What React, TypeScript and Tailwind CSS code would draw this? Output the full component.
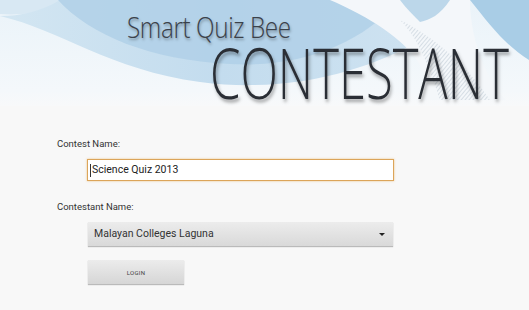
import React from 'react'

function BannerArt() {
  return (
    <svg
      className="absolute inset-0 h-full w-full"
      viewBox="0 0 529 106"
      preserveAspectRatio="none"
    >
      <defs>
        <linearGradient id="base" x1="0" y1="0" x2="0" y2="1">
          <stop offset="0" stopColor="#eaf3f9" />
          <stop offset="0.85" stopColor="#f4f8fb" />
          <stop offset="1" stopColor="#f8f9fa" />
        </linearGradient>
        <linearGradient id="swoosh" x1="0" y1="0" x2="1" y2="0">
          <stop offset="0" stopColor="#d3e6f2" />
          <stop offset="0.5" stopColor="#c3dcee" />
          <stop offset="1" stopColor="#cfe3f1" />
        </linearGradient>
        <pattern id="stripes" width="3" height="3" patternUnits="userSpaceOnUse" patternTransform="rotate(40)">
          <rect width="1" height="3" fill="#c9d3dc" />
        </pattern>
      </defs>
      <rect width="529" height="106" fill="url(#base)" />
      {/* top-left pale blue */}
      <path d="M0,0 L70,0 C60,10 30,16 0,14 Z" fill="#d8e8f3" />
      {/* big medium swoosh */}
      <path
        d="M0,16 C60,30 110,70 200,82 C290,94 370,70 420,40 L440,0 L60,0 C40,12 20,16 0,16 Z"
        fill="url(#swoosh)"
      />
      {/* darker upper arc */}
      <path
        d="M58,0 C90,35 150,60 230,64 C300,68 360,45 400,0 Z"
        fill="#b0d0e7"
        opacity="0.85"
      />
      {/* white ribbon on the right */}
      <path
        d="M330,0 L470,0 C470,30 480,70 505,100 L420,100 C440,70 400,30 330,0 Z"
        fill="#f4f7fa"
      />
      <path
        d="M400,20 C440,40 470,70 490,100 L440,100 C430,70 420,40 400,20 Z"
        fill="url(#stripes)"
        opacity="0.7"
      />
      {/* blue right corner */}
      <path d="M470,0 L529,0 L529,60 C505,45 490,25 470,0 Z" fill="#a9cde6" />
      <path d="M400,0 L450,0 C440,15 430,20 420,22 C412,14 406,8 400,0 Z" fill="#bcd7ea" />
    </svg>
  )
}

export default function App() {
  return (
    <div className="h-[310px] w-[529px] overflow-hidden bg-[#f8f8f8]">
      {/* Banner */}
      <div className="relative h-[106px] overflow-hidden">
        <BannerArt />
        <div className="relative flex flex-col items-start pl-[127px] pt-[10px]" style={{ fontFamily: '"Open Sans", sans-serif' }}>
          <span className="inline-block origin-left scale-x-[0.81] whitespace-nowrap text-[30px] font-light leading-[34px] tracking-[-0.5px] text-[#3b414a] [text-shadow:1px_2px_3px_rgba(0,0,0,0.35)]">
            Smart Quiz Bee
          </span>
          <span className="ml-[83px] -mt-[4px] inline-block origin-left scale-x-[0.7] whitespace-nowrap text-[70px] font-light leading-[64px] text-[#2a2e35] [text-shadow:2px_3px_4px_rgba(0,0,0,0.35)]">
            CONTESTANT
          </span>
        </div>
      </div>

      {/* Form */}
      <div className="flex flex-col items-start pl-[57px] pt-[30px]" style={{ fontFamily: 'Roboto, sans-serif' }}>
        <label className="text-[9.5px] leading-[15px] text-[#333]">Contest Name:</label>
        <div className="ml-[30px] mt-[8px] flex h-[22px] w-[307px] items-center border border-[#dca55a] bg-white pl-[2px] shadow-[0_0_2px_rgba(230,160,60,0.6)]">
          <span className="mr-[1px] h-[13px] w-px bg-[#333]" />
          <span className="text-[10.5px] text-[#222]">Science Quiz 2013</span>
        </div>

        <label className="mt-[18px] text-[9.5px] leading-[15px] text-[#333]">Contestant Name:</label>
        <div className="ml-[31px] mt-[8px] flex h-[24px] w-[305px] items-center justify-between bg-gradient-to-b from-[#ececec] to-[#d9d9d9] px-[6px] shadow-[0_1px_1px_rgba(0,0,0,0.25)]">
          <span className="text-[10.5px] text-[#333]">Malayan Colleges Laguna</span>
          <span className="mr-[2px] h-0 w-0 border-x-[3px] border-t-[3px] border-x-transparent border-t-[#222]" />
        </div>

        <button className="ml-[31px] mt-[14px] flex h-[24px] w-[96px] items-center justify-center bg-gradient-to-b from-[#ececec] to-[#d6d6d6] text-[6px] tracking-[0.3px] text-[#444] shadow-[0_1px_1px_rgba(0,0,0,0.25)]">
          LOGIN
        </button>
      </div>
    </div>
  )
}
